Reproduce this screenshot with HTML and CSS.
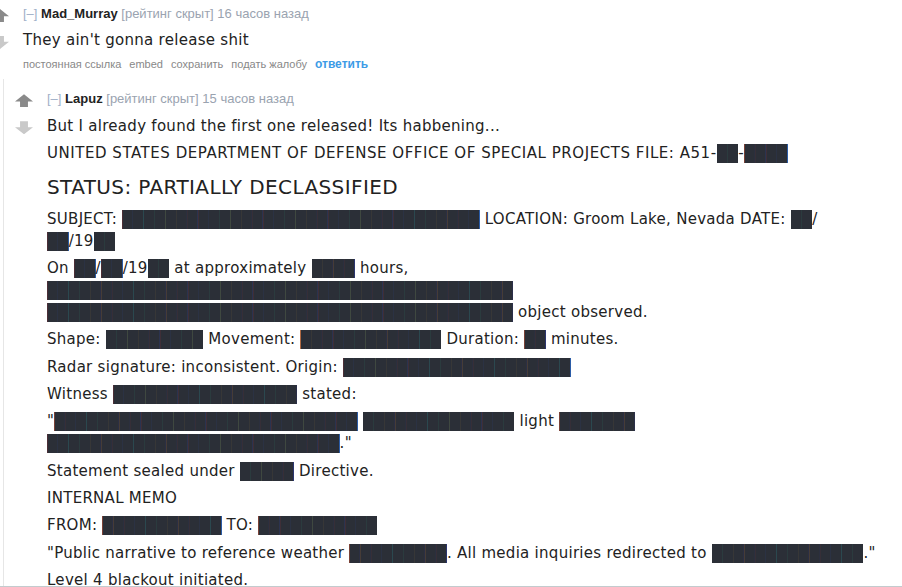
FILE: index.html
```html
<!DOCTYPE html>
<html lang="ru">
<head>
  <meta charset="UTF-8" />
  <title>Comments</title>
  <link rel="stylesheet" href="styles.css">
</head>
<body>
  <div class="commentarea">
    <div class="comment">
      <div class="row">
        <div class="midcol">
          <span class="arrow up"></span>
          <span class="arrow down"></span>
        </div>
        <div class="entry">
          <p class="tagline">
            <a class="expand">[–]</a>
            <a class="author">Mad_Murray</a>
            <span class="score">[рейтинг скрыт]</span>
            <span class="time">16 часов назад</span>
          </p>
          <div class="md">
            <p>They ain't gonna release shit</p>
          </div>
          <ul class="buttons">
            <li>постоянная ссылка</li>
            <li>embed</li>
            <li>сохранить</li>
            <li>подать жалобу</li>
            <li class="reply">ответить</li>
          </ul>
        </div>
      </div>

      <div class="child">
        <div class="comment">
          <div class="row">
            <div class="midcol">
              <span class="arrow up"></span>
              <span class="arrow down"></span>
            </div>
            <div class="entry">
              <p class="tagline">
                <a class="expand">[–]</a>
                <a class="author">Lapuz</a>
                <span class="score">[рейтинг скрыт]</span>
                <span class="time">15 часов назад</span>
              </p>
              <div class="md">
                <p>But I already found the first one released! Its habbening...</p>
                <p class="file-no">UNITED STATES DEPARTMENT OF DEFENSE OFFICE OF SPECIAL PROJECTS FILE: A51-<span class="rd">██</span>-<span class="rd">████</span></p>
                <h2>STATUS: PARTIALLY DECLASSIFIED</h2>
                <p>SUBJECT: <span class="rd">█████████████████████████████████</span> LOCATION: Groom Lake, Nevada DATE: <span class="rd">██</span>/<br><span class="rd">██</span>/19<span class="rd">██</span></p>
                <p>On <span class="rd">██</span>/<span class="rd">██</span>/19<span class="rd">██</span> at approximately <span class="rd">████</span> hours,<br><span class="rd">███████████████████████████████████████████</span><br><span class="rd">███████████████████████████████████████████</span> object observed.</p>
                <p>Shape: <span class="rd">█████████</span> Movement: <span class="rd">█████████████</span> Duration: <span class="rd">██</span> minutes.</p>
                <p>Radar signature: inconsistent. Origin: <span class="rd">█████████████████████</span></p>
                <p>Witness <span class="rd">█████████████████</span> stated:</p>
                <p>"<span class="rd">████████████████████████████</span> <span class="rd">██████████████</span> light <span class="rd">███████</span><br><span class="rd">███████████████████████████</span>."</p>
                <p>Statement sealed under <span class="rd">█████</span> Directive.</p>
                <p>INTERNAL MEMO</p>
                <p>FROM: <span class="rd">███████████</span> TO: <span class="rd">███████████</span></p>
                <p>"Public narrative to reference weather <span class="rd">█████████</span>. All media inquiries redirected to <span class="rd">██████████████</span>."</p>
                <p>Level 4 blackout initiated.</p>
              </div>
            </div>
          </div>
        </div>
      </div>
    </div>
  </div>
  <div class="footline"></div>
</body>
</html>
```

FILE: styles.css
```css
body {
  margin: 0;
  background: #fff;
  font-family: "Liberation Sans", Arial, sans-serif;
  color: #222;
  overflow: hidden;
}

.commentarea {
  padding-top: 6px;
}

.row {
  display: flex;
}

.midcol {
  width: 18px;
  margin-right: 14px;
  padding-top: 3px;
  display: flex;
  flex-direction: column;
  gap: 14px;
}

.commentarea > .comment > .row > .midcol {
  margin-left: -9px;
}

.arrow {
  display: block;
  width: 18px;
  height: 13px;
  background: #c9c9c9;
  clip-path: polygon(50% 0, 100% 55%, 72% 55%, 72% 100%, 28% 100%, 28% 55%, 0 55%);
}

.arrow.up {
  background: #8a8a8a;
}

.arrow.down {
  clip-path: polygon(28% 0, 72% 0, 72% 45%, 100% 45%, 50% 100%, 0 45%, 28% 45%);
}

.entry {
  flex: 1;
  max-width: 845px;
}

.tagline {
  margin: 0;
  font-size: 13px;
  line-height: 16px;
  color: #9aa3b0;
}

.tagline a {
  text-decoration: none;
}

.expand {
  color: #9fb0c8;
}

.author {
  color: #222;
  font-weight: bold;
}

.md {
  font-family: "DejaVu Sans", Verdana, sans-serif;
  font-size: 15px;
  letter-spacing: 0.28px;
  line-height: 22px;
  color: #222;
  padding-top: 2px;
}

.md p {
  margin: 5.3px 0;
}

.md .file-no {
  letter-spacing: 0.54px;
}

.md h2 {
  font-size: 20px;
  letter-spacing: 0.4px;
  font-weight: normal;
  line-height: 26px;
  margin: 10px 0 8px;
}

.rd {
  display: inline-block;
  height: 19px;
  overflow: hidden;
  vertical-align: -5px;
  font-family: "DejaVu Sans Mono", monospace;
  font-size: 18px;
  letter-spacing: 0;
  line-height: 19px;
  color: #2b2f37;
}

.buttons {
  list-style: none;
  margin: 6px 0 0;
  padding: 0;
  display: flex;
  gap: 8px;
  font-size: 11px;
  line-height: 14px;
  color: #888;
}

.buttons .reply {
  color: #3d9be6;
  font-weight: bold;
  font-size: 12px;
}

.child {
  margin-top: 8px;
  margin-left: 3px;
  border-left: 1px solid #e6e6e6;
  padding-left: 11px;
  padding-top: 12px;
}

.footline {
  position: fixed;
  left: 0;
  right: 0;
  bottom: 0;
  height: 1px;
  background: #c3cbce;
}
```
